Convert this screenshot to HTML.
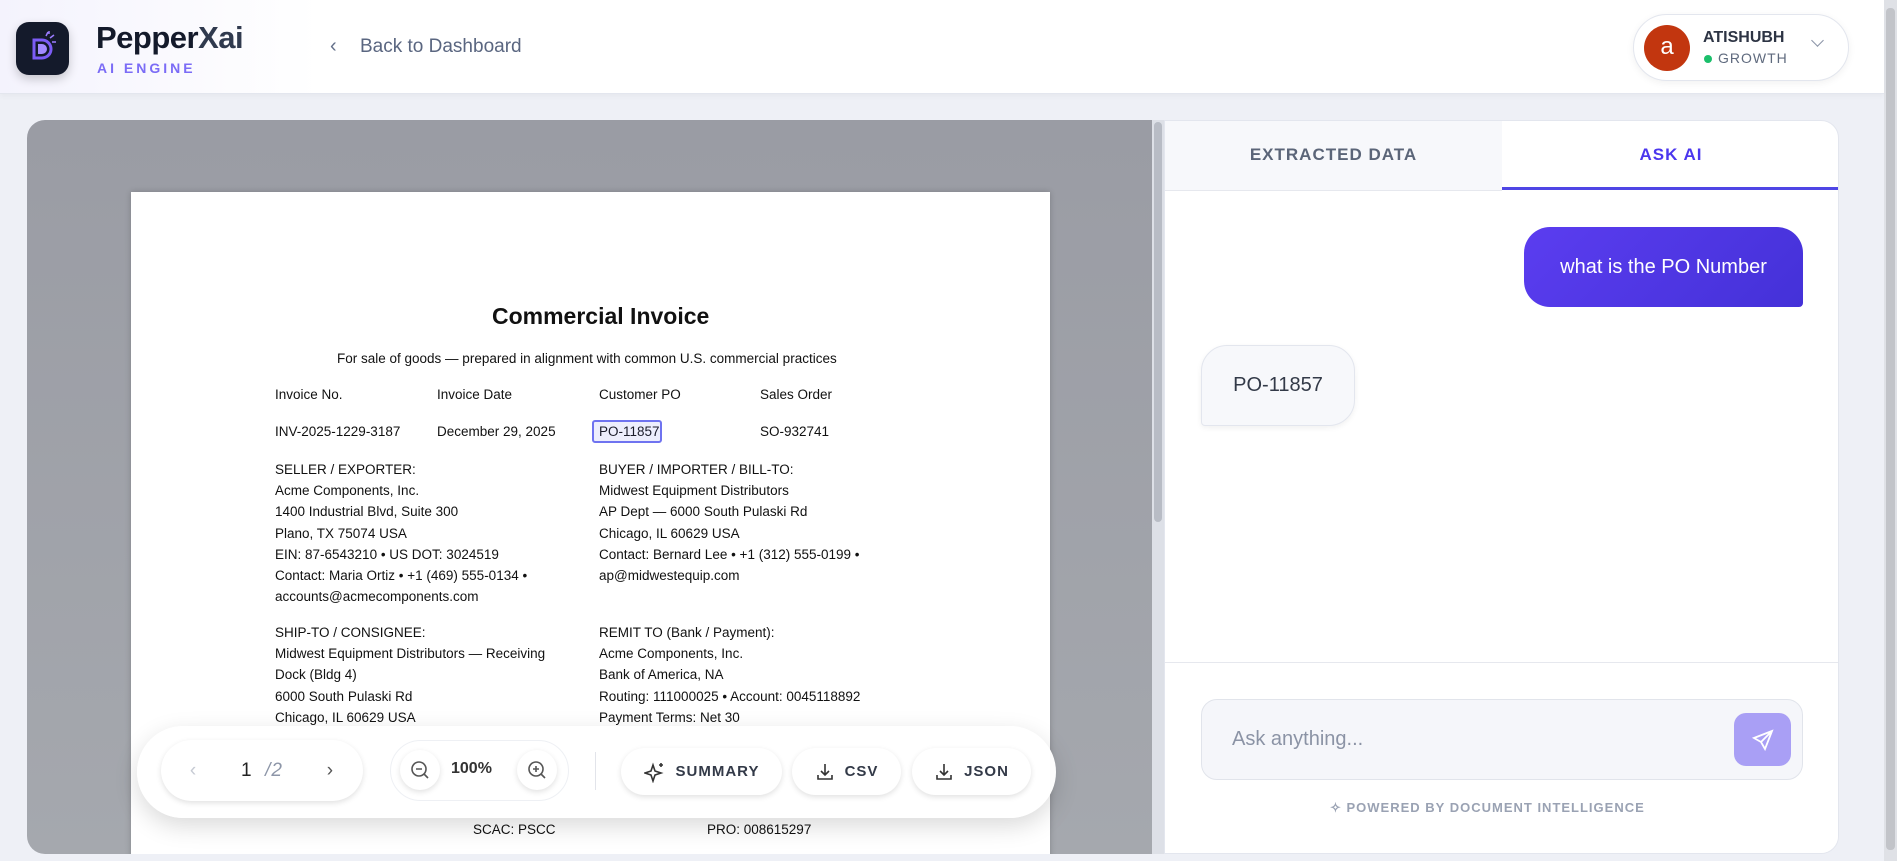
<!DOCTYPE html>
<html><head><meta charset="utf-8"><style>
*{box-sizing:border-box;margin:0;padding:0}
body{width:1897px;height:861px;overflow:hidden;background:#eef0f6;font-family:"Liberation Sans",sans-serif;position:relative}
.abs{position:absolute}
.hdr{left:0;top:0;width:1884px;height:94px;background:linear-gradient(90deg,#f4f3fd 0,#fff 320px);border-bottom:1px solid #e3e6ee;box-shadow:0 2px 6px rgba(0,0,0,.04)}
.doctext{position:absolute;font-size:13.5px;color:#111;white-space:nowrap}
.btn{position:absolute;background:#fff;border-radius:24px;box-shadow:0 2px 6px rgba(0,0,0,.12);display:flex;align-items:center;justify-content:center;gap:10px;font-weight:bold;font-size:15px;letter-spacing:1px;color:#333a48}
</style></head><body>
<div class="abs hdr"></div>
<div class="abs" style="left:16px;top:22px;width:53px;height:53px;border-radius:13px;background:#141a2b;box-shadow:0 4px 10px rgba(0,0,0,.2)">
<svg width="53" height="53" viewBox="0 0 53 53"><path d="M18 18h8a9 9 0 0 1 0 18h-8z" fill="none" stroke="#7c5cf5" stroke-width="3"/><path d="M22 22h4a5 5 0 0 1 0 10h-4z" fill="#a48bff"/><g stroke="#9b7cff" stroke-width="1.5"><path d="M30 14l2-4M34 16l4-3M36 20h4M33 12l0-3"/></g></svg></div>
<div class="abs" style="left:96px;top:20px;font-size:31px;font-weight:bold;color:#141a2b;letter-spacing:-0.5px">Pepper<span style="color:#303a4e">Xai</span></div>
<div class="abs" style="left:97px;top:60px;font-size:14px;font-weight:bold;color:#7b6cf6;letter-spacing:3px">AI ENGINE</div>
<div class="abs" style="left:330px;top:35px;font-size:20px;color:#64708a">‹</div>
<div class="abs" style="left:360px;top:36px;font-size:19px;color:#5a6680;font-weight:500">Back to Dashboard</div>
<div class="abs" style="left:1633px;top:14px;width:216px;height:67px;border-radius:34px;background:#fff;border:1px solid #e3e6ee;box-shadow:0 2px 8px rgba(0,0,0,.06)"></div>
<div class="abs" style="left:1644px;top:25px;width:46px;height:46px;border-radius:50%;background:#c2360f;color:#fff;font-size:24px;text-align:center;line-height:44px">a</div>
<div class="abs" style="left:1703px;top:29px;font-size:16px;font-weight:bold;color:#2d3444">ATISHUBH</div>
<div class="abs" style="left:1704px;top:55px;width:8px;height:8px;border-radius:50%;background:#1bbf6b"></div>
<div class="abs" style="left:1718px;top:50px;font-size:14px;color:#5f6a7e;letter-spacing:1px">GROWTH</div>
<div class="abs" style="left:1813px;top:36px;width:9px;height:9px;border-right:1.5px solid #8a93a6;border-bottom:1.5px solid #8a93a6;transform:rotate(45deg)"></div>
<div class="abs" style="left:1884px;top:0;width:13px;height:861px;background:#dfe1e6"></div>
<div class="abs" style="left:1886px;top:8px;width:9px;height:842px;background:#c2c4c9;border-radius:4px"></div>
<div class="abs" style="left:27px;top:120px;width:1125px;height:734px;border-radius:18px 0 0 18px;background:linear-gradient(180deg,#9a9ca4,#a5a8ae);overflow:hidden">
<div class="abs" style="left:104px;top:72px;width:919px;height:700px;background:#fff;box-shadow:0 0 6px rgba(0,0,0,.2)"></div>
</div>
<div class="abs" style="left:1152px;top:120px;width:12px;height:734px;background:#dde0e7"></div>
<div class="abs" style="left:1154px;top:122px;width:8px;height:400px;background:#b8bcc5;border-radius:4px"></div>
<div class="doctext" style="left:492px;top:303px;font-size:23px;font-weight:bold">Commercial Invoice</div>
<div class="doctext" style="left:337px;top:351px">For sale of goods — prepared in alignment with common U.S. commercial practices</div>
<div class="doctext" style="left:275px;top:387px">Invoice No.</div><div class="doctext" style="left:437px;top:387px">Invoice Date</div><div class="doctext" style="left:599px;top:387px">Customer PO</div><div class="doctext" style="left:760px;top:387px">Sales Order</div>
<div class="doctext" style="left:275px;top:424px">INV-2025-1229-3187</div><div class="doctext" style="left:437px;top:424px">December 29, 2025</div><div class="doctext" style="left:599px;top:424px">PO-11857</div><div class="doctext" style="left:760px;top:424px">SO-932741</div>
<div class="abs" style="left:592px;top:420px;width:70px;height:23px;border:2px solid #6f73f0;border-radius:3px;background:rgba(111,115,240,.12)"></div>
<div class="doctext" style="left:275px;top:459px;line-height:21.2px">SELLER / EXPORTER:<br>Acme Components, Inc.<br>1400 Industrial Blvd, Suite 300<br>Plano, TX 75074 USA<br>EIN: 87-6543210 • US DOT: 3024519<br>Contact: Maria Ortiz • +1 (469) 555-0134 •<br>accounts@acmecomponents.com</div>
<div class="doctext" style="left:599px;top:459px;line-height:21.2px">BUYER / IMPORTER / BILL-TO:<br>Midwest Equipment Distributors<br>AP Dept — 6000 South Pulaski Rd<br>Chicago, IL 60629 USA<br>Contact: Bernard Lee • +1 (312) 555-0199 •<br>ap@midwestequip.com</div>
<div class="doctext" style="left:275px;top:622px;line-height:21.2px">SHIP-TO / CONSIGNEE:<br>Midwest Equipment Distributors — Receiving<br>Dock (Bldg 4)<br>6000 South Pulaski Rd<br>Chicago, IL 60629 USA</div>
<div class="doctext" style="left:599px;top:622px;line-height:21.2px">REMIT TO (Bank / Payment):<br>Acme Components, Inc.<br>Bank of America, NA<br>Routing: 111000025 • Account: 0045118892<br>Payment Terms: Net 30</div>
<div class="doctext" style="left:473px;top:822px">SCAC: PSCC</div><div class="doctext" style="left:707px;top:822px">PRO: 008615297</div>
<div class="abs" style="left:137px;top:726px;width:919px;height:92px;border-radius:46px;background:rgba(255,255,255,.97);box-shadow:0 8px 24px rgba(0,0,0,.15)"></div>
<div class="btn" style="left:161px;top:740px;width:202px;height:61px;border-radius:31px;font-weight:normal;font-size:19px;justify-content:space-around;padding:0 12px"><span style="color:#c6cad3">‹</span><span style="color:#222">1 <span style="color:#8d96a8;font-style:italic">&nbsp;/2</span></span><span style="color:#555">›</span></div>
<div class="abs" style="left:390px;top:740px;width:179px;height:61px;border-radius:31px;border:1px solid #eef0f4"></div>
<div class="btn" style="left:400px;top:750px;width:40px;height:40px;border-radius:50%;font-weight:normal;color:#555"><svg width="22" height="22" viewBox="0 0 22 22" fill="none" stroke="#555" stroke-width="1.6"><circle cx="10" cy="10" r="7"/><path d="M7 10h6M15 15l4 4"/></svg></div>
<div class="abs" style="left:451px;top:760px;font-size:16px;font-weight:bold;color:#333">100%</div>
<div class="btn" style="left:517px;top:750px;width:40px;height:40px;border-radius:50%;color:#555"><svg width="22" height="22" viewBox="0 0 22 22" fill="none" stroke="#555" stroke-width="1.6"><circle cx="10" cy="10" r="7"/><path d="M7 10h6M10 7v6M15 15l4 4"/></svg></div>
<div class="abs" style="left:595px;top:752px;width:1px;height:38px;background:#e2e4ea"></div>
<div class="btn" style="left:621px;top:748px;width:161px;height:47px"><svg width="22" height="22" viewBox="0 0 22 22" fill="none" stroke="#333" stroke-width="1.6"><path d="M9 4l2 6 6 2-6 2-2 6-2-6-6-2 6-2z"/><path d="M17 2v4M15 4h4"/></svg>SUMMARY</div>
<div class="btn" style="left:792px;top:748px;width:109px;height:47px"><svg width="20" height="20" viewBox="0 0 20 20" fill="none" stroke="#333" stroke-width="1.6"><path d="M10 2v11M6 9l4 4 4-4M3 13v4h14v-4"/></svg>CSV</div>
<div class="btn" style="left:912px;top:748px;width:119px;height:47px"><svg width="20" height="20" viewBox="0 0 20 20" fill="none" stroke="#333" stroke-width="1.6"><path d="M10 2v11M6 9l4 4 4-4M3 13v4h14v-4"/></svg>JSON</div>
<div class="abs" style="left:1164px;top:120px;width:675px;height:734px;background:#fff;border-radius:0 18px 18px 0;border:1px solid #e3e6ee;overflow:hidden">
<div class="abs" style="left:0;top:0;width:337px;height:70px;background:#f7f8fb;border-bottom:1px solid #e6e8ee"></div>
<div class="abs" style="left:0;top:24px;width:337px;text-align:center;font-size:17px;font-weight:bold;color:#5b6578;letter-spacing:1px">EXTRACTED DATA</div>
<div class="abs" style="left:337px;top:24px;width:338px;text-align:center;font-size:17px;font-weight:bold;color:#4b36ee;letter-spacing:1px">ASK AI</div>
<div class="abs" style="left:337px;top:66px;width:338px;height:3px;background:#4f46e5"></div>
<div class="abs" style="left:0;top:541px;width:675px;height:193px;background:#fff;border-top:1px solid #e6e8ee"></div>
</div>
<div class="abs" style="left:1524px;top:227px;width:279px;height:80px;border-radius:26px 26px 4px 26px;background:linear-gradient(135deg,#5b3df0,#4431d8);color:#fff;font-size:20px;display:flex;align-items:center;justify-content:center">what is the PO Number</div>
<div class="abs" style="left:1201px;top:345px;width:154px;height:81px;border-radius:26px 26px 26px 4px;background:#f7f8fb;border:1px solid #e3e6ee;box-shadow:0 2px 6px rgba(0,0,0,.06);color:#333a48;font-size:20px;display:flex;align-items:center;justify-content:center">PO-11857</div>
<div class="abs" style="left:1201px;top:699px;width:602px;height:81px;border-radius:16px;background:#f5f6fa;border:1px solid #e1e4eb"></div>
<div class="abs" style="left:1232px;top:728px;font-size:20px;color:#8b93a5">Ask anything...</div>
<div class="abs" style="left:1734px;top:713px;width:57px;height:53px;border-radius:12px;background:#a99ff5;display:flex;align-items:center;justify-content:center"><svg width="22" height="22" viewBox="0 0 22 22" fill="none" stroke="#fff" stroke-width="1.8"><path d="M20 2L9 13M20 2l-7 18-4-7-7-4z"/></svg></div>
<div class="abs" style="left:1330px;top:800px;font-size:13px;font-weight:bold;color:#9aa2b3;letter-spacing:1px">✧ POWERED BY DOCUMENT INTELLIGENCE</div>
</body></html>
